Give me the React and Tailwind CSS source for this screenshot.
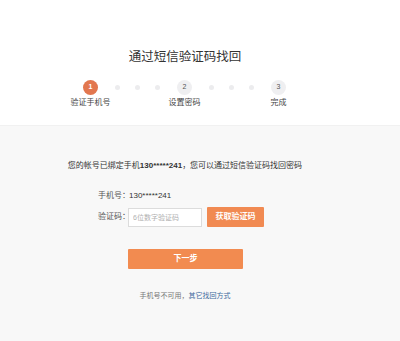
export default function App() {
  const steps = [
    { n: 1, label: '验证手机号', active: true },
    { n: 2, label: '设置密码', active: false },
    { n: 3, label: '完成', active: false },
  ];

  return (
    <div
      className="w-[400px] h-[341px] flex flex-col bg-white text-[#333]"
      style={{ fontFamily: '"Liberation Sans", "Noto Sans CJK SC", sans-serif' }}
    >
      {/* header + steps */}
      <div className="h-[125px] w-[370px] flex flex-col items-center pt-[47px]">
        <h1 className="text-[12.5px] leading-[20px] text-[#333]">通过短信验证码找回</h1>
        <div className="w-full flex items-start pl-[83px] mt-[13px]">
          {steps.map((s, i) => (
            <div key={s.n} className="flex items-start">
              <div className="w-[15px] flex flex-col items-center">
                <div
                  className={
                    s.active
                      ? 'w-[15px] h-[15px] rounded-full bg-[#e2774f] text-white text-[7px] font-bold flex items-center justify-center'
                      : 'w-[15px] h-[15px] rounded-full bg-[#efeff1] text-[#555] text-[7px] flex items-center justify-center'
                  }
                >
                  {s.n}
                </div>
                <span className="mt-[2px] text-[8px] leading-[12px] text-[#444] whitespace-nowrap">{s.label}</span>
              </div>
              {i < steps.length - 1 && (
                <div className="flex items-center gap-[15px] px-[17px] h-[15px]">
                  <span className="w-[5px] h-[5px] rounded-full bg-[#ececee]" />
                  <span className="w-[5px] h-[5px] rounded-full bg-[#ececee]" />
                  <span className="w-[5px] h-[5px] rounded-full bg-[#ececee]" />
                </div>
              )}
            </div>
          ))}
        </div>
      </div>

      {/* form */}
      <div className="flex-1 bg-[#f8f8f8] border-t border-[#f1f1f1]">
        <div className="w-[370px] flex flex-col pt-[34px]">
          <p className="text-center text-[8px] leading-[12px] text-[#333]">
            您的帐号已绑定手机<span className="font-bold">130*****241</span>，您可以通过短信验证码找回密码
          </p>

          <div className="flex items-center pl-[98px] mt-[18px] h-[12px] text-[8px] leading-[12px]">
            <span className="w-[31px] whitespace-nowrap text-[#555]">手机号：</span>
            <span className="text-[#333]">130*****241</span>
          </div>

          <div className="flex items-center pl-[98px] mt-[5px] h-[20px] text-[8px]">
            <span className="w-[30px] whitespace-nowrap text-[#555]">验证码：</span>
            <input
              className="w-[74px] h-[19px] bg-white border border-[#dcdcdc] px-[4px] text-[7px] text-[#333] outline-none placeholder:text-[#b0b0b0]"
              placeholder="6位数字验证码"
            />
            <button className="ml-[5px] w-[57px] h-[20px] bg-[#f18a52] text-white text-[8px] font-bold rounded-[1px]">
              获取验证码
            </button>
          </div>

          <button className="ml-[128px] mt-[22px] w-[115px] h-[20px] bg-[#f28b50] text-white text-[8px] font-bold rounded-[1px]">
            下一步
          </button>

          <p className="mt-[22px] text-center text-[7px] leading-[10px] text-[#777]">
            手机号不可用，<a className="text-[#3e6a9c]">其它找回方式</a>
          </p>
        </div>
      </div>
    </div>
  );
}
